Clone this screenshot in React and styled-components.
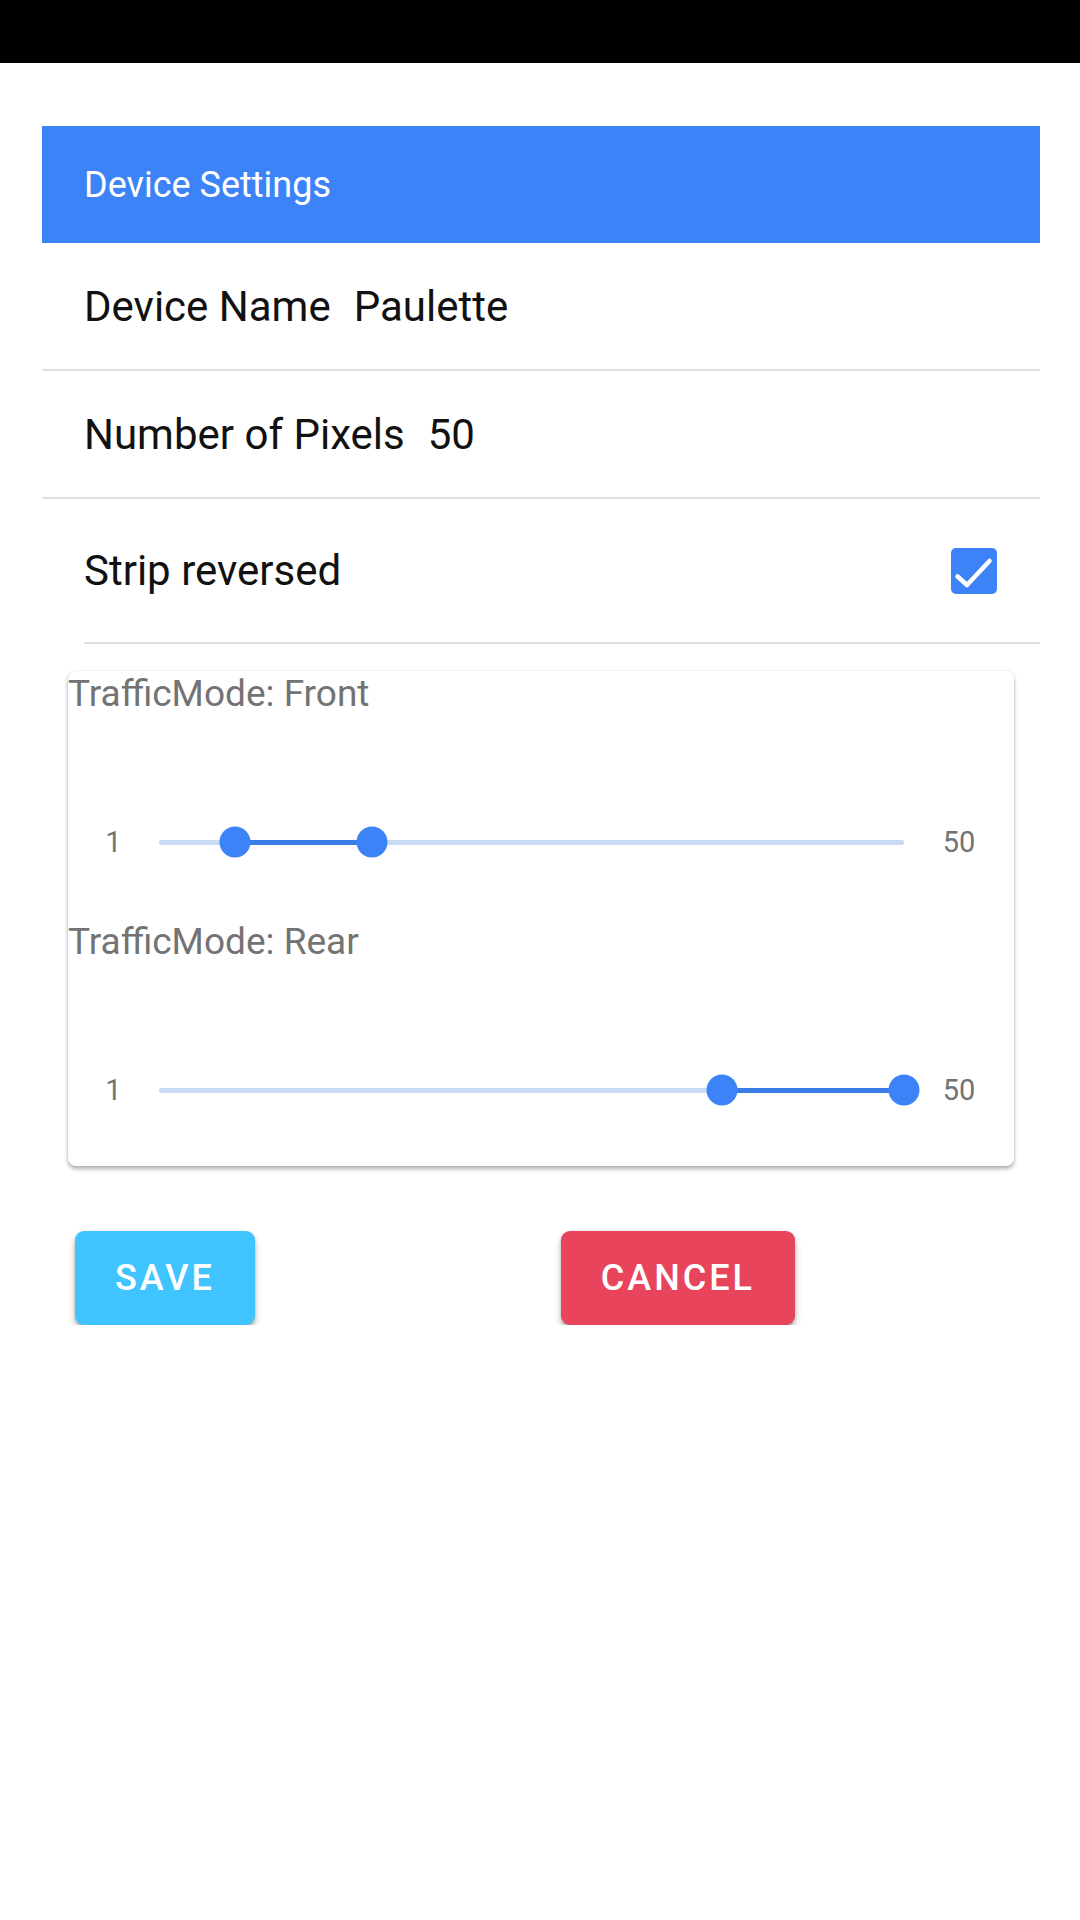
import React from 'react';
import styled, { createGlobalStyle } from 'styled-components';

const GlobalStyle = createGlobalStyle`
  body {
    margin: 0;
    background: #ffffff;
    font-family: Roboto, 'Liberation Sans', sans-serif;
  }
`;

const MIN = 1;
const MAX = 50;

const ranges = [
  { label: 'TrafficMode: Front', from: 6, to: 15 },
  { label: 'TrafficMode: Rear', from: 38, to: 50 },
];

const pct = (v) => ((v - MIN) / (MAX - MIN)) * 100;

const App = () => {
  return (
    <>
      <GlobalStyle />
      <StatusBar />
      <Main>
        <Header>Device Settings</Header>
        <Row>
          <Label>Device Name</Label>
          <Value>Paulette</Value>
        </Row>
        <Row>
          <Label>Number of Pixels</Label>
          <Value>50</Value>
        </Row>
        <Row tall inset>
          <Label>Strip reversed</Label>
          <Checkbox>
            <svg width="46" height="46" viewBox="0 0 46 46">
              <path
                d="M6.5 28.5l9.5 8.5L38.5 13"
                fill="none"
                stroke="#ffffff"
                strokeWidth="4.5"
                strokeLinecap="round"
                strokeLinejoin="round"
              />
            </svg>
          </Checkbox>
        </Row>
        <Card>
          {ranges.map((r, i) => (
            <Section key={r.label} first={i === 0}>
              <RangeLabel>{r.label}</RangeLabel>
              <SliderRow>
                <EndLabel width={91}>{MIN}</EndLabel>
                <Track>
                  <ActiveTrack
                    style={{ left: `${pct(r.from)}%`, width: `${pct(r.to) - pct(r.from)}%` }}
                  />
                  <Thumb style={{ left: `${pct(r.from)}%` }} />
                  <Thumb style={{ left: `${pct(r.to)}%` }} />
                </Track>
                <EndLabel width={110}>{MAX}</EndLabel>
              </SliderRow>
            </Section>
          ))}
        </Card>
        <Actions>
          <Button color="#40c4ff">Save</Button>
          <Button color="#e8445c">Cancel</Button>
        </Actions>
      </Main>
    </>
  );
};

const StatusBar = styled.div`
  height: 63px;
  background: #000000;
`;

const Main = styled.div`
  padding: 63px 40px 0 42px;
`;

const Header = styled.div`
  height: 117px;
  display: flex;
  align-items: center;
  padding-left: 42px;
  background: #3d83f8;
  color: #ffffff;
  font-size: 36px;
`;

const Row = styled.div`
  display: flex;
  align-items: center;
  gap: 23px;
  height: ${(p) => (p.tall ? '143px' : '126px')};
  margin-left: ${(p) => (p.inset ? '42px' : '0')};
  padding-left: ${(p) => (p.inset ? '0' : '42px')};
  padding-right: 43px;
  border-bottom: 2px solid #e0e0e0;
  color: #111111;
  font-size: 42px;
`;

const Label = styled.span`
  flex: none;
`;

const Value = styled.span`
  flex: none;
`;

const Checkbox = styled.div`
  margin-left: auto;
  width: 46px;
  height: 46px;
  border-radius: 5px;
  background: #3d83f8;
  display: flex;
`;

const Card = styled.div`
  margin: 27px 26px 0;
  padding: 4px 0 56px;
  border-radius: 8px;
  background: #ffffff;
  box-shadow: 0 3px 4px rgba(0, 0, 0, 0.3), 0 0 2px rgba(0, 0, 0, 0.12);
`;

const Section = styled.div`
  margin-top: ${(p) => (p.first ? '0' : '61px')};
`;

const RangeLabel = styled.div`
  font-size: 37px;
  line-height: 1;
  color: #737373;
`;

const SliderRow = styled.div`
  display: flex;
  align-items: center;
  height: 40px;
  margin-top: 110px;
`;

const EndLabel = styled.div`
  width: ${(p) => p.width}px;
  flex: none;
  text-align: center;
  font-size: 29px;
  color: #737373;
`;

const Track = styled.div`
  position: relative;
  flex: 1;
  height: 5px;
  border-radius: 2px;
  background: #cbdaf3;
`;

const ActiveTrack = styled.div`
  position: absolute;
  top: 0;
  height: 5px;
  background: #3b7be4;
`;

const Thumb = styled.div`
  position: absolute;
  top: 50%;
  width: 31px;
  height: 31px;
  border-radius: 50%;
  background: #3d83f8;
  transform: translate(-50%, -50%);
`;

const Actions = styled.div`
  display: flex;
  gap: 306px;
  margin-top: 65px;
  padding-left: 33px;
`;

const Button = styled.button`
  height: 94px;
  padding: 0 40px;
  border: none;
  border-radius: 9px;
  background: ${(p) => p.color};
  color: #ffffff;
  font-family: Roboto, 'Liberation Sans', sans-serif;
  font-size: 36px;
  font-weight: 500;
  letter-spacing: 3px;
  text-transform: uppercase;
  box-shadow: 0 5px 7px rgba(0, 0, 0, 0.25), 0 1px 3px rgba(0, 0, 0, 0.18);
`;

export default App;
